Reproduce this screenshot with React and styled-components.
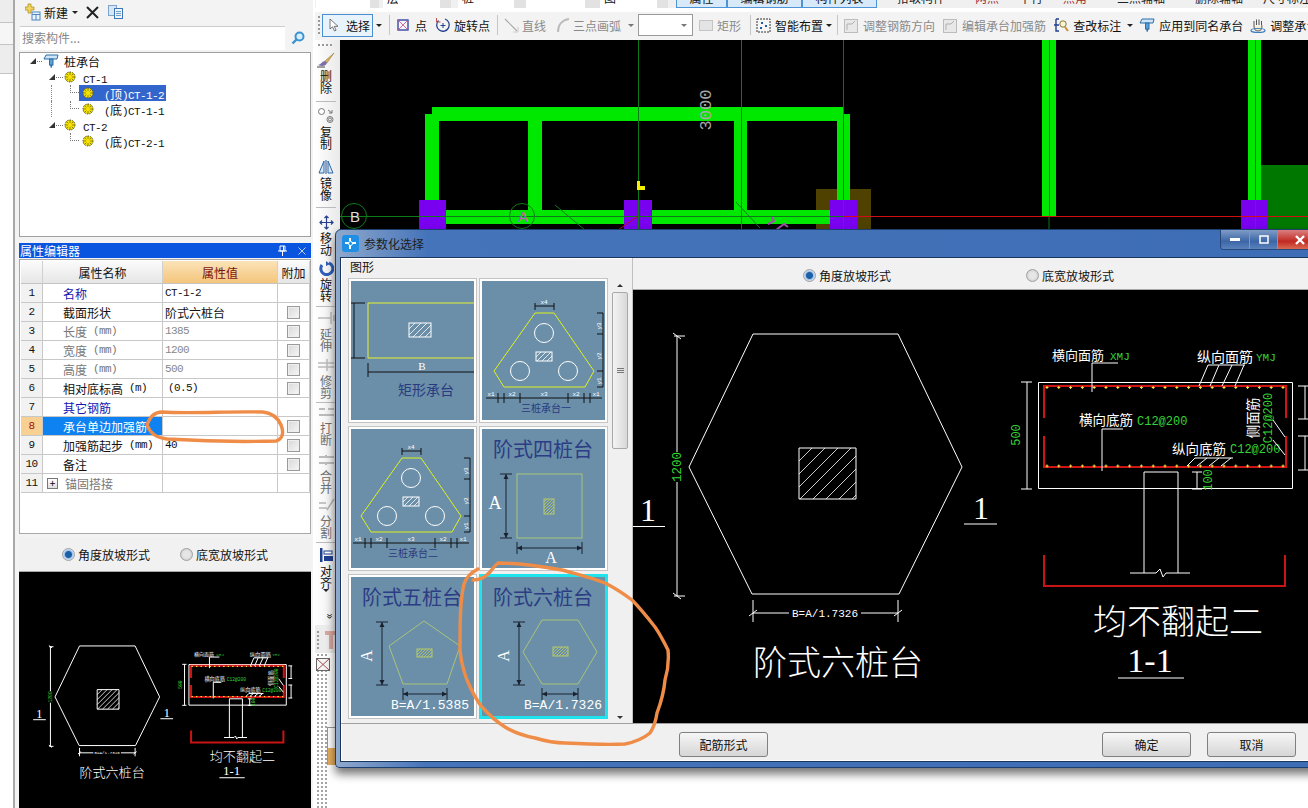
import React from "react";
import styled, { createGlobalStyle } from "styled-components";

const CJK = `"Noto Sans CJK SC", "Liberation Sans", sans-serif`;
const MONO = `"Liberation Mono", "Noto Sans CJK SC", monospace`;
const SERIF = `"Liberation Serif", "Noto Sans CJK SC", serif`;

const GlobalStyle = createGlobalStyle`
  html, body { margin: 0; padding: 0; background: #fff; }
  body { font-family: ${CJK}; font-size: 12px; color: #111; }
`;

const Page = styled.div`
  position: relative;
  display: flex;
  width: 1308px;
  height: 808px;
  overflow: hidden;
  background: #fff;
`;

const EdgeRail = styled.div`
  width: 13px;
  flex: none;
  border-right: 2px solid #a8a8a8;
  background: #fff;
  display: flex;
  flex-direction: column;
`;

const EdgeTab = styled.div`
  height: ${(p) => p.$h}px;
  background: ${(p) => p.$bg};
  border-bottom: 1px solid #c4c4c4;
`;

const SidePanel = styled.div`
  width: 298px;
  flex: none;
  display: flex;
  flex-direction: column;
  background: #f3f3f3;
  margin-right: 2px;
`;

const SideBar = styled.div`
  height: 24px;
  flex: none;
  margin-bottom: 2px;
  display: flex;
  align-items: center;
  padding-left: 10px;
`;

const SideLabel = styled.span`
  margin-left: 3px;
  font-size: 12px;
`;

const SideAction = styled.span`
  display: flex;
  margin-left: ${(p) => p.$ml}px;
`;

const Caret = styled.span`
  flex: none;
  margin-left: ${(p) => p.$ml || 0}px;
  width: 0;
  height: 0;
  border-left: 3px solid transparent;
  border-right: 3px solid transparent;
  border-top: 3px solid ${(p) => (p.$off ? "#777" : "#222")};
`;

const SearchRow = styled.div`
  height: 24px;
  flex: none;
  margin: 0 3px 1px 5px;
  display: flex;
  align-items: stretch;
`;

const SearchInput = styled.div`
  width: 265px;
  background: #fff;
  color: #888;
  font-size: 12px;
  line-height: 21px;
  padding-left: 2px;
  box-sizing: border-box;
  border-top: 1px solid #ccc;
`;

const SearchButton = styled.div`
  flex: 1;
  display: flex;
  align-items: center;
  justify-content: center;
`;

const TreeBox = styled.div`
  height: 185px;
  flex: none;
  box-sizing: border-box;
  margin: 1px 2px 0 4px;
  background: #fff;
  border: 1px solid #a0a0a0;
`;

const TreeRow = styled.div`
  display: flex;
  align-items: center;
  height: 16px;
  padding-left: ${(p) => p.$indent}px;
`;

const Expander = styled.span`
  width: 0;
  height: 0;
  flex: none;
  border-left: 6px solid transparent;
  border-bottom: 6px solid #333;
`;

const DotLink = styled.span`
  width: ${(p) => p.$w}px;
  margin: 0 1px;
  flex: none;
  border-top: 1px dotted #777;
`;

const TreeGuide = styled.span`
  width: 19px;
  height: 16px;
  flex: none;
  box-sizing: border-box;
  border-left: ${(p) => (p.$on ? "1px dotted #888" : "0")};
`;

const TreeElbow = styled.span`
  width: 9px;
  height: 8px;
  flex: none;
  align-self: flex-start;
  box-sizing: border-box;
  border-left: 1px dotted #777;
  border-bottom: 1px dotted #777;
`;

const TreeLeaf = styled.span`
  display: flex;
  align-items: center;
  height: 16px;
  padding: 0 2px 0 3px;
  gap: 10px;
  background: ${(p) => (p.$sel ? "#3366cc" : "transparent")};
  color: ${(p) => (p.$sel ? "#fff" : "#111")};
  white-space: nowrap;
`;

const TreeText = styled.span`
  margin-left: ${(p) => p.$ml}px;
  font-size: 12px;
  white-space: nowrap;
`;

const Mono = styled.span`
  font-family: ${MONO};
  font-size: 11px;
  letter-spacing: -0.6px;
`;

const PanelTitle = styled.div`
  height: 15px;
  flex: none;
  margin: 6px 2px 0 4px;
  padding: 0 5px 0 1px;
  background: #0a55e0;
  color: #fff;
  font-size: 12px;
  line-height: 15px;
  display: flex;
  align-items: center;
  justify-content: space-between;
`;

const TitleIcons = styled.span`
  display: flex;
  gap: 11px;
  align-items: center;
`;

const PropBox = styled.div`
  height: 275px;
  flex: none;
  box-sizing: border-box;
  margin: 1px 2px 0 4px;
  padding: 1px 0 0 1px;
  background: #fff;
  border: 1px solid #a8a8a8;
`;

const PropRow = styled.div`
  display: grid;
  grid-template-columns: 22px 120px 115px 32px;
  height: ${(p) => (p.$head ? 23 : 19)}px;
  width: 289px;
`;

const HeadCell = styled.div`
  display: flex;
  align-items: center;
  justify-content: center;
  font-size: 12px;
  color: ${(p) => (p.$active ? "#7a1010" : "#111")};
  background: ${(p) =>
    p.$active ? "linear-gradient(#fbe3b8, #f4c57c)" : "linear-gradient(#fbfbfb, #e6e6e6)"};
  border-right: 1px solid #d0d0d0;
  border-bottom: 1px solid #c4c4c4;
  box-sizing: border-box;
`;

const SeqCell = styled.div`
  display: flex;
  align-items: center;
  justify-content: center;
  font-family: ${MONO};
  font-size: 11px;
  letter-spacing: -0.6px;
  color: ${(p) => (p.$active ? "#a01010" : "#111")};
  background: ${(p) => (p.$active ? "#f8d092" : "#f2f2f2")};
  border-right: 1px solid #c8c8c8;
  border-bottom: 1px solid #c8c8c8;
  box-sizing: border-box;
`;

const nameColors = { blue: "#1616b0", gray: "#777", dark: "#111", sel: "#fff" };

const NameCell = styled.div`
  display: flex;
  align-items: center;
  padding-left: ${(p) => (p.$plus ? 4 : 20)}px;
  font-size: 12px;
  white-space: nowrap;
  overflow: hidden;
  color: ${(p) => nameColors[p.$tone]};
  background: ${(p) => (p.$tone === "sel" ? "#0f82f2" : "#fff")};
  border-right: 1px solid #c8c8c8;
  border-bottom: 1px solid #c8c8c8;
  box-sizing: border-box;
`;

const PlusBox = styled.span`
  width: 9px;
  height: 9px;
  margin-right: 7px;
  flex: none;
  border: 1px solid #777;
  background: linear-gradient(#fff, #ddd);
  color: #000;
  font-size: 10px;
  line-height: 8px;
  text-align: center;
`;

const ValueCell = styled.div`
  display: flex;
  align-items: center;
  padding-left: ${(p) => p.$pad || 2}px;
  font-size: 12px;
  color: ${(p) => (p.$gray ? "#888" : "#111")};
  border-right: 1px solid #c8c8c8;
  border-bottom: 1px solid #c8c8c8;
  box-sizing: border-box;
`;

const AddCell = styled.div`
  display: flex;
  align-items: center;
  justify-content: center;
  border-right: 1px solid #c8c8c8;
  border-bottom: 1px solid #c8c8c8;
  box-sizing: border-box;
`;

const CheckBox = styled.span`
  width: 11px;
  height: 11px;
  border: 1px solid #9a9a9a;
  background: linear-gradient(135deg, #d8d8d8, #f6f6f6);
  box-shadow: inset 0 0 0 1px #efefef;
`;

const RadioRow = styled.div`
  display: flex;
  align-items: center;
  flex: none;
  height: ${(p) => p.$h}px;
  margin: ${(p) => p.$margin || 0};
  padding-left: ${(p) => p.$pad}px;
  padding-top: ${(p) => p.$top || 0}px;
  background: #f1f1f1;
  border-bottom: 1px solid #a8a8a8;
  font-size: 12px;
  box-sizing: border-box;
`;

const Radio = styled.span`
  width: 11px;
  height: 11px;
  flex: none;
  border-radius: 50%;
  border: 1px solid #a0a0a0;
  margin-left: ${(p) => p.$ml || 0}px;
  margin-right: 3px;
  background: ${(p) =>
    p.$on
      ? "radial-gradient(circle, #1a5fa8 0 3px, #9cc2e4 4px, #eef 6px)"
      : "radial-gradient(circle, #e6e6e6 0 3px, #d0d0d0 6px)"};
`;

const MiniPreview = styled.div`
  flex: 1;
  margin: 0 2px 0 4px;
  background: #000;
  min-height: 0;
`;

const DrawingSvg = styled.svg`
  display: block;
  width: 100%;
  flex: 1;
  min-height: 0;
  height: 100%;
  background: #000;
  & line,
  & polyline,
  & polygon,
  & rect,
  & path {
    vector-effect: non-scaling-stroke;
  }
`;

const RightSide = styled.div`
  flex: 1;
  min-width: 0;
  display: flex;
  flex-direction: column;
`;

const TopStrip = styled.div`
  height: 8px;
  flex: none;
  display: flex;
  align-items: flex-end;
  overflow: hidden;
  background: #f0f0f0;
  white-space: nowrap;
`;

const StripField = styled.span`
  flex: none;
  height: 20px;
  width: ${(p) => p.$w}px;
  margin-left: ${(p) => p.$ml}px;
  background: ${(p) => p.$bg || "#fff"};
  font-size: 12px;
  line-height: 20px;
  padding-left: ${(p) => p.$pad || 0}px;
  box-sizing: border-box;
`;

const StripButton = styled.span`
  flex: none;
  height: 20px;
  width: ${(p) => p.$w}px;
  background: #d8e9f9;
  border: 1px solid #4d94d6;
  box-sizing: border-box;
  font-size: 12px;
  line-height: 18px;
  text-align: center;
`;

const StripText = styled.span`
  flex: none;
  height: 20px;
  margin-left: ${(p) => p.$ml}px;
  font-size: 12px;
  line-height: 20px;
  color: ${(p) => p.$color || "#222"};
`;

const Toolbar = styled.div`
  height: 28px;
  flex: none;
  margin-top: 4px;
  padding: 0 0 2px 3px;
  box-sizing: border-box;
  display: flex;
  align-items: center;
  background: #f3f3f3;
  overflow: hidden;
  white-space: nowrap;
`;

const Grip = styled.span`
  width: 2px;
  height: 18px;
  flex: none;
  background: repeating-linear-gradient(#999 0 2px, transparent 2px 4px);
`;

const SelectButton = styled.button`
  flex: none;
  margin-left: 2px;
  width: 51px;
  height: 23px;
  padding: 0 0 0 6px;
  display: flex;
  align-items: center;
  gap: 7px;
  background: #e9f3fc;
  border: 1px solid #4a90d0;
  font: 12px ${CJK};
  color: #111;
`;

const ToolItem = styled.span`
  flex: none;
  display: flex;
  align-items: center;
  gap: ${(p) => p.$gap || 4}px;
  margin-left: ${(p) => p.$ml}px;
  font-size: 12px;
  color: ${(p) => (p.$off ? "#8a8a8a" : "#111")};
`;

const ToolSep = styled.span`
  width: 1px;
  height: 20px;
  flex: none;
  margin-left: ${(p) => p.$ml}px;
  background: #c6c6c6;
`;

const ComboBox = styled.span`
  flex: none;
  width: 55px;
  height: 22px;
  margin-left: ${(p) => p.$ml}px;
  box-sizing: border-box;
  padding-right: 5px;
  display: flex;
  align-items: center;
  justify-content: flex-end;
  background: #fff;
  border: 1px solid #9a9a9a;
`;

const WorkRow = styled.div`
  flex: 1;
  display: flex;
  min-height: 0;
`;

const ToolRail = styled.div`
  width: 25px;
  flex: none;
  display: flex;
  flex-direction: column;
  background: #fff;
`;

const RailTools = styled.div`
  height: 585px;
  flex: none;
  padding: 4px 3px 0 0;
  box-sizing: border-box;
  display: flex;
  flex-direction: column;
  align-items: center;
  background: linear-gradient(to right, #fff, #e9e9e9);
`;

const RailGrip = styled.span`
  width: 16px;
  height: 2px;
  flex: none;
  margin-bottom: 2px;
  background: repeating-linear-gradient(to right, #999 0 2px, transparent 2px 4px);
`;

const RailItem = styled.div`
  flex: none;
  display: flex;
  flex-direction: column;
  align-items: center;
  margin-top: ${(p) => p.$mt}px;
  width: 100%;
  height: 42px;
  color: ${(p) => (p.$off ? "#707070" : "#111")};
  font-size: 12px;
  line-height: 12px;
`;

const RailIcon = styled.span`
  height: 16px;
  flex: none;
  display: flex;
  align-items: center;
  justify-content: center;
`;

const RailLabel = styled.span`
  width: 12px;
  margin-top: 2px;
  text-align: center;
`;

const RailSep = styled.span`
  width: 20px;
  height: 1px;
  flex: none;
  margin-top: ${(p) => p.$mt}px;
  background: #bbb;
`;

const RailMore = styled.span`
  margin: 20px 0 0 10px;
  font-size: 12px;
  line-height: 8px;
  transform: rotate(90deg);
`;

const RailFoot = styled.div`
  flex: 1;
  display: flex;
  flex-direction: column;
  min-height: 0;
`;

const FootTool = styled.div`
  height: 26px;
  flex: none;
  padding: 2px 0 0 2px;
  display: flex;
  align-items: center;
  gap: 5px;
  background: #ececec;
`;

const FootBody = styled.div`
  flex: 1;
  display: flex;
  min-height: 0;
`;

const DottedStrip = styled.div`
  width: 11px;
  flex: none;
  margin-left: 1px;
  padding-top: 4px;
  background-image: radial-gradient(circle, #a4a4a4 1px, transparent 1.2px);
  background-size: 4px 4px;
`;

const PeekPanel = styled.div`
  width: 9px;
  height: 37px;
  flex: none;
  margin-top: 74px;
  border-left: 1px solid #999;
  border-top: 1px solid #999;
  background: linear-gradient(#fff 0 20px, #e4ad5c 20px);
`;

const WorkColumn = styled.div`
  flex: 1;
  min-width: 0;
  display: flex;
  flex-direction: column;
`;

const Canvas = styled.div`
  height: 190px;
  flex: none;
  background: #000;
`;

const CanvasSvg = styled.svg`
  display: block;
  width: 100%;
  height: 100%;
`;

/* floating dialog */
const Dialog = styled.div`
  position: absolute;
  left: 335px;
  top: 229px;
  width: 985px;
  height: 539px;
  display: flex;
  flex-direction: column;
  box-sizing: border-box;
  padding: 0 4px 5px;
  border-radius: 6px 6px 4px 4px;
  border: 1px solid #1d3f70;
  background: linear-gradient(to right, #8fa9cc 0, #4674ba 90px, #3d6db5 100%);
  box-shadow: 0 6px 10px rgba(0, 0, 0, 0.55);
`;

const DialogTitle = styled.div`
  height: 27px;
  flex: none;
  display: flex;
  align-items: center;
  gap: 5px;
  padding-left: 2px;
  color: #1d1d1d;
  font-size: 12px;
`;

const WindowButtons = styled.div`
  position: absolute;
  top: 0;
  right: -5px;
  display: flex;
  height: 19px;
  border: 1px solid #27487a;
  border-top: 0;
  border-radius: 0 0 4px 4px;
  overflow: hidden;
`;

const WindowButton = styled.span`
  width: ${(p) => p.$w}px;
  display: flex;
  align-items: center;
  justify-content: center;
  border-right: 1px solid #7a98c4;
  background: ${(p) =>
    p.$close
      ? "linear-gradient(#d98080, #c22a22 60%, #d86a50)"
      : "linear-gradient(#7f9cc6, #3c66a6 60%, #5a82bc)"};
  color: #fff;
`;

const DialogBody = styled.div`
  flex: 1;
  min-height: 0;
  display: flex;
  flex-direction: column;
  background: #f0f0f0;
  border: 1px solid #18365f;
  box-shadow: inset 0 0 0 1px #fff;
`;

const DialogMain = styled.div`
  flex: 1;
  min-height: 0;
  display: flex;
  border-bottom: 1px solid #a0a0a0;
`;

const ListPane = styled.div`
  width: 291px;
  flex: none;
  display: flex;
  flex-direction: column;
  border-right: 1px solid #c0c0c0;
`;

const ListTitle = styled.div`
  height: 23px;
  flex: none;
  padding-left: 9px;
  font-size: 12px;
  line-height: 18px;
  color: #111;
`;

const ListBody = styled.div`
  flex: 1;
  display: flex;
  padding-left: 10px;
`;

const ShapeGrid = styled.div`
  display: grid;
  grid-template-columns: 123px 123px;
  grid-auto-rows: 139px;
  column-gap: 8px;
  row-gap: 9px;
  width: 254px;
`;

const ShapeCell = styled.div`
  background: #6b8fa8;
  box-shadow: 0 0 0 ${(p) => (p.$sel ? "3px #1fe4ee" : "2px #fff, 0 0 0 3px #c4c4c4")};
`;

const ShapeSvg = styled.svg`
  display: block;
  width: 123px;
  height: 139px;
`;

const ScrollBar = styled.div`
  width: 16px;
  margin-left: 7px;
  display: flex;
  flex-direction: column;
  align-items: center;
  height: 441px;
`;

const ScrollArrow = styled.span`
  width: 0;
  height: 0;
  flex: none;
  margin: ${(p) => (p.$up ? "3px 0 5px" : "auto 0 3px")};
  border-left: 3px solid transparent;
  border-right: 3px solid transparent;
  ${(p) => (p.$up ? "border-bottom: 3px solid #333;" : "border-top: 3px solid #333;")}
`;

const ScrollThumb = styled.div`
  width: 14px;
  height: 155px;
  flex: none;
  display: flex;
  flex-direction: column;
  align-items: center;
  justify-content: center;
  gap: 1px;
  border: 1px solid #a8a8a8;
  border-radius: 2px;
  background: linear-gradient(to right, #f4f4f4, #d8d8d8);
`;

const ScrollTick = styled.span`
  width: 7px;
  height: 1px;
  background: #777;
`;

const PreviewPane = styled.div`
  flex: 1;
  min-width: 0;
  display: flex;
  flex-direction: column;
`;

const ButtonBar = styled.div`
  height: 37px;
  flex: none;
  box-sizing: border-box;
  display: flex;
  align-items: center;
  padding: 4px 18px 0 338px;
  gap: 16px;
`;

const DialogButton = styled.button`
  width: 89px;
  height: 25px;
  margin-left: ${(p) => (p.$push ? "auto" : "0")};
  padding: 0;
  font: 12px ${CJK};
  color: #111;
  border: 1px solid #808080;
  border-radius: 3px;
  background: linear-gradient(#f6f6f6, #e6e6e6 50%, #d6d6d6);
`;

const Annotation = styled.svg`
  position: absolute;
  left: 0;
  top: 0;
  width: 1308px;
  height: 808px;
  pointer-events: none;
`;

/* small icons */
const GearIcon = () => (
  <svg width="12" height="12" viewBox="0 0 12 12">
    <circle cx="6" cy="6" r="5" fill="#f4e200" stroke="#5a5a20" strokeDasharray="1.5 1" />
    <path d="M6 1v10M1 6h10M2.5 2.5l7 7M9.5 2.5l-7 7" stroke="#6b5a00" strokeWidth="0.7" />
    <circle cx="6" cy="6" r="2.2" fill="#f4e200" />
  </svg>
);

const CapIcon = ({ size = 16 }) => (
  <svg width={size} height={size} viewBox="0 0 16 16">
    <path d="M3 2h12l-1 4H1z" fill="#cfe4f7" stroke="#2b6ea8" />
    <rect x="6.5" y="6" width="3.5" height="6" fill="#5aa0d8" stroke="#2b6ea8" />
    <path d="M7 12h2.5l-1 3h-.6z" fill="#2b6ea8" />
  </svg>
);

const NewIcon = () => (
  <svg width="16" height="18" viewBox="0 0 16 18">
    <path d="M3 1h3v3h3v3H6v3H3V7H0V4h3z" fill="#f2d35c" stroke="#a58a20" strokeWidth="0.7" />
    <rect x="7" y="9" width="8" height="8" fill="#eaf2fb" stroke="#4d86c0" />
    <path d="M7 11.5h8M11 11.5V17" stroke="#4d86c0" />
  </svg>
);

const CrossIcon = () => (
  <svg width="13" height="13" viewBox="0 0 13 13">
    <path d="M1 1l11 11M12 1L1 12" stroke="#222" strokeWidth="2" />
  </svg>
);

const CopyIcon = () => (
  <svg width="15" height="14" viewBox="0 0 15 14">
    <rect x="0.5" y="0.5" width="8" height="10" fill="#d8e6f6" stroke="#7ba3cc" />
    <rect x="6.5" y="3.5" width="8" height="10" fill="#eef4fb" stroke="#3e78b2" />
    <path d="M8 6.5h5M8 8.5h5M8 10.5h5" stroke="#3e78b2" strokeWidth="0.7" />
  </svg>
);

const SearchIcon = () => (
  <svg width="14" height="14" viewBox="0 0 14 14">
    <circle cx="8.5" cy="5.5" r="4" fill="#d9eefc" stroke="#3b93cf" strokeWidth="2" />
    <path d="M5.5 8.5L1.5 12.5" stroke="#3b93cf" strokeWidth="2.4" />
  </svg>
);

const PinIcon = () => (
  <svg width="9" height="11" viewBox="0 0 9 11">
    <path d="M2 1h5v5H2zM0 6h9M4.5 6v5M5.5 1v5" fill="none" stroke="#fff" />
  </svg>
);

const PanelCloseIcon = () => (
  <svg width="8" height="8" viewBox="0 0 8 8">
    <path d="M0.5 0.5l7 7M7.5 0.5l-7 7" stroke="#bcd0f4" />
  </svg>
);

const PointerIcon = () => (
  <svg width="10" height="14" viewBox="0 0 10 14">
    <path d="M1 1v10l2.5-2.2L5.5 13l1.6-.8L5.2 8.3H9z" fill="#fff" stroke="#555" strokeWidth="0.8" />
  </svg>
);

const BoxCrossIcon = () => (
  <svg width="12" height="12" viewBox="0 0 12 12">
    <rect x="1" y="1" width="10" height="10" fill="#f4f4fb" stroke="#2c3a9c" strokeWidth="1.3" />
    <path d="M1 1l10 10M11 1L1 11" stroke="#c04a7a" strokeWidth="0.8" />
  </svg>
);

const RotateIcon = () => (
  <svg width="16" height="16" viewBox="0 0 16 16">
    <path d="M3.5 3.5A6.3 6.3 0 1 0 10 2" fill="none" stroke="#24408c" strokeWidth="1.3" />
    <path d="M1.5 1v4h4" fill="none" stroke="#b55" strokeWidth="1" />
    <path d="M8 6v5M5.5 8.5h5" stroke="#24408c" />
  </svg>
);

const LineIcon = () => (
  <svg width="15" height="15" viewBox="0 0 15 15">
    <path d="M1 1l12 12" stroke="#aaa" strokeWidth="1.2" />
    <path d="M9 14h5V9" fill="none" stroke="#ccc" />
  </svg>
);

const ArcIcon = () => (
  <svg width="14" height="15" viewBox="0 0 14 15">
    <path d="M2 14C2 7 6 2 13 1" fill="none" stroke="#bbb" strokeWidth="2" />
  </svg>
);

const RectIcon = () => (
  <svg width="14" height="11" viewBox="0 0 14 11">
    <rect x="0.5" y="0.5" width="13" height="10" fill="#e4e4e4" stroke="#c4c4c4" />
  </svg>
);

const SmartIcon = () => (
  <svg width="15" height="15" viewBox="0 0 15 15">
    <rect x="1" y="1" width="13" height="13" fill="#f6f6f6" stroke="#333" strokeDasharray="2 1" />
    <path d="M5 4h2v2H5zM9 7h2v2H9zM4 9h2v2H4z" fill="#1b5ea8" />
  </svg>
);

const GreyBoxIcon = () => (
  <svg width="14" height="15" viewBox="0 0 14 15">
    <rect x="0.5" y="1.5" width="13" height="13" fill="#e8e8e8" stroke="#bcbcbc" />
    <path d="M3 12V6h5l3-3" fill="none" stroke="#b0b0b0" />
  </svg>
);

const CheckMarkIcon = () => (
  <svg width="16" height="16" viewBox="0 0 16 16">
    <path d="M3 2h3M3 2v12h3M1 8h5" fill="none" stroke="#24408c" strokeWidth="1.4" />
    <circle cx="10" cy="7" r="3.2" fill="#f8f4d8" stroke="#8a7a30" />
    <path d="M12 10l3 4" stroke="#c9902c" strokeWidth="2" />
  </svg>
);

const HandIcon = () => (
  <svg width="16" height="16" viewBox="0 0 16 16">
    <path
      d="M4 9V4M6.5 8V2.5M9 8V2.5M11.5 8.5V4M4 9c0 3 1 5 4 5s4-2 4-5.5"
      fill="#f7f0d4"
      stroke="#555"
    />
    <ellipse cx="8" cy="13.5" rx="7" ry="2" fill="none" stroke="#3b7cc0" strokeWidth="1.2" />
  </svg>
);

const BrushIcon = () => (
  <svg width="18" height="16" viewBox="0 0 18 16">
    <path d="M17 1L8 9l2 2z" fill="#d8b060" stroke="#8a6a20" strokeWidth="0.5" />
    <path d="M8 9c-3 0-3 3-7 4 4 2 8 1 9-2z" fill="#7c6ea8" />
    <path d="M0 15h8" stroke="#444" />
  </svg>
);

const CopyShapeIcon = () => (
  <svg width="17" height="16" viewBox="0 0 17 16">
    <circle cx="3.5" cy="3.5" r="3" fill="#fff" stroke="#777" />
    <circle cx="12" cy="11.5" r="3" fill="none" stroke="#777" />
    <circle cx="12" cy="11.5" r="1.5" fill="none" stroke="#777" />
    <path d="M10 2l4 3M14 2v3h-3" fill="none" stroke="#777" />
  </svg>
);

const MirrorIcon = () => (
  <svg width="16" height="14" viewBox="0 0 16 14">
    <path d="M8 0v14" stroke="#24508c" />
    <path d="M6 1L1 13h5zM10 1l5 12h-5z" fill="#d8e6f6" stroke="#2c68a8" />
  </svg>
);

const MoveIcon = () => (
  <svg width="15" height="15" viewBox="0 0 15 15">
    <path d="M7.5 1v13M1 7.5h13M5.5 3l2-2 2 2M5.5 12l2 2 2-2M3 5.5l-2 2 2 2M12 5.5l2 2-2 2" fill="none" stroke="#24408c" strokeWidth="1.2" />
  </svg>
);

const SpinIcon = () => (
  <svg width="15" height="15" viewBox="0 0 15 15">
    <path d="M3 4a6 6 0 1 0 7-2" fill="none" stroke="#2f5fb8" strokeWidth="3" />
    <path d="M7 0v5l4-2z" fill="#2f5fb8" />
  </svg>
);

const FadeBarsIcon = ({ kind }) => (
  <svg width="17" height="14" viewBox="0 0 17 14">
    {kind === "extend" && <path d="M0 7h13M13 1v12M16 4v6" stroke="#bbb" strokeWidth="1.5" fill="none" />}
    {kind === "trim" && <path d="M0 5h16M0 9h16M9 1v12" stroke="#bbb" strokeWidth="1.5" fill="none" />}
    {kind === "break" && <path d="M1 4h6M10 4h6M1 10h15" stroke="#bbb" strokeWidth="2" fill="none" />}
    {kind === "merge" && <path d="M1 4h15M1 10h15M8 2v2M8 10v2" stroke="#bbb" strokeWidth="2" fill="none" />}
    {kind === "split" && <path d="M1 5h7M1 10h8M9 12l7-11" stroke="#b4b4b4" strokeWidth="1.5" fill="none" />}
  </svg>
);

const AlignIcon = () => (
  <svg width="15" height="16" viewBox="0 0 15 16">
    <rect x="1" y="1" width="2.5" height="14" fill="#1f3f90" />
    <rect x="5" y="4" width="8" height="3" fill="#fff" stroke="#1f3f90" />
    <rect x="5" y="9" width="9" height="5" fill="#1f3f90" />
  </svg>
);

const ArrowUpFaded = () => (
  <svg width="14" height="20" viewBox="0 0 14 20">
    <path d="M1 3h12M7 3v16" stroke="#d8a8a0" strokeWidth="4" />
  </svg>
);

const EnvelopeIcon = () => (
  <svg width="14" height="13" viewBox="0 0 14 13">
    <rect x="0.5" y="0.5" width="13" height="12" fill="#f4f4f4" stroke="#666" />
    <path d="M1 1l12 11M13 1L1 12" stroke="#a05050" />
  </svg>
);

const DialogIcon = () => (
  <svg width="17" height="17" viewBox="0 0 17 17">
    <rect width="17" height="17" rx="3" fill="#1f8fe6" />
    <path d="M8 3v3M8 10v4M3 8h4M10 8h4" stroke="#fff" strokeWidth="2" />
    <circle cx="8.5" cy="8.5" r="2" fill="none" stroke="#dff" />
  </svg>
);

/* CAD drawing parts */
const Hatch = ({ x, y, w, h, step, stroke = "#fff", sw = 1 }) => {
  const lines = [];
  for (let c = x + y + step; c < x + y + w + h; c += step) {
    let x1 = c - y;
    let y1 = y;
    if (x1 > x + w) {
      x1 = x + w;
      y1 = c - x1;
    }
    let x2 = x;
    let y2 = c - x;
    if (y2 > y + h) {
      y2 = y + h;
      x2 = c - y2;
    }
    lines.push(<line key={c} x1={x1} y1={y1} x2={x2} y2={y2} stroke={stroke} strokeWidth={sw * 0.8} />);
  }
  return (
    <g>
      {lines}
      <rect x={x} y={y} width={w} height={h} fill="none" stroke={stroke} strokeWidth={sw} />
    </g>
  );
};

const Seg = ({ d, c = "#fff", w = 1 }) => <path d={d} fill="none" stroke={c} strokeWidth={w} />;

const Txt = ({ x, y, size, c = "#fff", font = CJK, anchor = "middle", rot, children, weight }) => (
  <text
    x={x}
    y={y}
    fontSize={size}
    fill={c}
    fontFamily={font}
    fontWeight={weight}
    textAnchor={anchor}
    transform={rot ? `rotate(${rot} ${x} ${y})` : undefined}
  >
    {children}
  </text>
);

const dots = Array.from({ length: 21 }, (_, i) => 1047 + i * 11.8);

const PreviewDrawing = () => (
  <g>
    <polygon points="753,334 898,334 962,467 899,594 752,594 689,467" fill="none" stroke="#fff" />
    <Hatch x={799} y={448} w={57} h={51} step={13} />
    <Seg d="M677 336V596M674 336h11M674 596h11M673 333l8 6M673 593l8 6" />
    <rect x={672} y={452} width={11} height={30} fill="#000" stroke="none" />
    <Txt x={681} y={467} size={12.5} c="#35d435" font={MONO} rot={-90}>1200</Txt>
    <Txt x={648} y={521} size={32} font={SERIF}>1</Txt>
    <Seg d="M632 526.5H665" />
    <Txt x={981} y={519} size={32} font={SERIF}>1</Txt>
    <Seg d="M964 524H997" />
    <Seg d="M753 600V622M898 600V622M753 613H789M861 613H898M749 616l8 -6M894 616l8 -6" />
    <Txt x={825} y={617} size={11} font={MONO}>B=A/1.7326</Txt>
    <Txt x={838} y={675} size={34} weight={300}>阶式六桩台</Txt>

    <rect x={1038.5} y={382.5} width={254} height={106} fill="none" stroke="#fff" />
    <Seg d="M1044 418V386H1286V418M1044 436V467H1286V436" c="#d01414" w={2} />
    {dots.map((x) => (
      <g key={x}>
        <Seg d={`M${x - 1.5} 387.5h3M${x} 386v3`} c="#f6e04a" />
        <Seg d={`M${x - 1.5} 466h3M${x} 464.5v3`} c="#f6e04a" />
      </g>
    ))}
    <Seg d="M1027 382V489M1021 382h11M1021 489h11" />
    <Txt x={1020} y={435} size={12} c="#35d435" font={MONO} rot={-90}>500</Txt>

    <Txt x={1052} y={360} size={13} anchor="start">横向面筋</Txt>
    <Txt x={1110} y={360} size={11} anchor="start" c="#35d435" font={MONO}>XMJ</Txt>
    <Seg d="M1118 363H1092V392" />
    <Txt x={1197} y={362} size={14} anchor="start">纵向面筋</Txt>
    <Txt x={1256} y={361} size={11} anchor="start" c="#35d435" font={MONO}>YMJ</Txt>
    <Seg d="M1208 365H1245M1208 365L1199 386M1219 365L1210 386M1232 365L1222 386M1244 365L1235 386" />
    <Txt x={1079} y={425} size={13.5} anchor="start">横向底筋</Txt>
    <Txt x={1137} y={425} size={12} anchor="start" c="#35d435" font={MONO}>C12@200</Txt>
    <Seg d="M1123 429H1102V471" />
    <Txt x={1172} y={454} size={13.5} anchor="start">纵向底筋</Txt>
    <Txt x={1230} y={453} size={12} anchor="start" c="#35d435" font={MONO}>C12@200</Txt>
    <Seg d="M1195 458H1233M1195 458L1187 466M1207 458L1197 466M1219 458L1209 466M1231 458L1221 466" />
    <Txt x={1258} y={418} size={13.5} rot={-90}>侧面筋</Txt>
    <Txt x={1272} y={418} size={12} c="#35d435" font={MONO} rot={-90}>C12@200</Txt>
    <Seg d="M1273 420L1285 437M1273 440L1285 455" />

    <Seg d="M1144 573V472H1178V573M1130 573H1156L1160 569L1163 577L1166 573H1190" />
    <Seg d="M1192 472h10M1192 489h10M1197 472V489" />
    <Txt x={1212} y={480} size={12} c="#35d435" font={MONO} rot={-90}>100</Txt>
    <Seg d="M1298 386H1308M1298 419H1308M1298 436H1308M1298 470H1308M1305 386V419M1305 436V470" />

    <Seg d="M1044 555V586H1285V555" c="#c81414" w={2} />
    <Txt x={1178} y={634} size={34} weight={300}>均不翻起二</Txt>
    <Txt x={1150} y={672} size={34} font={SERIF}>1-1</Txt>
    <Seg d="M1118 678H1184" />
  </g>
);

const ThreePile = ({ label, dx = 0, dy = 0 }) => (
  <g transform={`translate(${dx} ${dy})`}>
    <polygon points="53,32 72,32 112,90 103,106 22,106 12,90" fill="none" stroke="#dcf21e" />
    <circle cx="62" cy="52" r="9.5" fill="none" stroke="#fff" />
    <circle cx="38" cy="90" r="9.5" fill="none" stroke="#fff" />
    <circle cx="86" cy="90" r="9.5" fill="none" stroke="#fff" />
    <Hatch x={54} y={71} w={16} h={9} step={5} />
    <Seg d="M53 25H72M53 22V29M72 22V29M115 32H121M121 32V106M115 53H121M115 90H121M115 106H121" c="#111" />
    <Seg d="M4 117H120M16 112V122M22 112V122M38 112V122M86 112V122M102 112V122M108 112V122" c="#111" />
    <Txt x={62} y={23} size={6} font={MONO}>x4</Txt>
    <Txt x={119} y={45} size={6} font={MONO} rot={-90}>y3</Txt>
    <Txt x={119} y={75} size={6} font={MONO} rot={-90}>y2</Txt>
    <Txt x={119} y={100} size={6} font={MONO} rot={-90}>y1</Txt>
    <Txt x={9} y={115} size={6} font={MONO}>x1</Txt>
    <Txt x={30} y={115} size={6} font={MONO}>x2</Txt>
    <Txt x={62} y={115} size={6} font={MONO}>x3</Txt>
    <Txt x={94} y={115} size={6} font={MONO}>x2</Txt>
    <Txt x={114} y={115} size={6} font={MONO}>x1</Txt>
    <Txt x={64} y={131} size={10} c="#2a3a80">{label}</Txt>
  </g>
);

const ArrowDim = ({ x, y1, y2 }) => (
  <g>
    <Seg d={`M${x} ${y1}V${y2}M${x - 6} ${y1}h12M${x - 6} ${y2}h12`} c="#1a2230" />
    <path d={`M${x} ${y1}l-2.5 5h5zM${x} ${y2}l-2.5 -5h5z`} fill="#1a2230" />
  </g>
);

const ArrowSpan = ({ y, x1, x2 }) => (
  <g>
    <Seg d={`M${x1} ${y}H${x2}M${x1} ${y - 6}v12M${x2} ${y - 6}v12`} c="#1a2230" />
    <path d={`M${x1} ${y}l5 -2.5v5zM${x2} ${y}l-5 -2.5v5z`} fill="#1a2230" />
  </g>
);

const PileFigure = ({ title, points, hatch, dimX, spanX, note, noteX, rotX }) => (
  <g>
    <Txt x={61} y={28} size={20} c="#2c3d85">{title}</Txt>
    <polygon points={points} fill="none" stroke="#a9c37a" />
    <Hatch x={hatch[0]} y={hatch[1]} w={hatch[2]} h={hatch[3]} step={3} stroke="#b7c96a" />
    <ArrowDim x={dimX} y1={45} y2={108} />
    <Txt x={rotX} y={79} size={16} font={SERIF} rot={-90}>A</Txt>
    <ArrowSpan y={117} x1={spanX[0]} x2={spanX[1]} />
    <Txt x={noteX} y={132} size={13} font={MONO} anchor="start">{note}</Txt>
  </g>
);

const shapes = [
  {
    key: "rect",
    body: (
      <g>
        <Seg d="M123 22H17V77H123" c="#e6f230" />
        <Hatch x={58} y={42} w={22} h={14} step={6} />
        <Seg d="M0 22H14M0 77H14M3 22V77M17 82V96M17 91H123" c="#111" />
        <Txt x={71} y={89} size={11} font={SERIF}>B</Txt>
        <Txt x={75} y={114} size={14} c="#2a3a80">矩形承台</Txt>
      </g>
    ),
  },
  { key: "tri1", body: <ThreePile label="三桩承台一" /> },
  { key: "tri2", body: <ThreePile label="三桩承台二" dx={-2} dy={-3} /> },
  {
    key: "four",
    body: (
      <g>
        <Txt x={61} y={28} size={20} c="#2c3d85">阶式四桩台</Txt>
        <rect x={35} y={45} width={65} height={64} fill="none" stroke="#a9c37a" />
        <Hatch x={62} y={70} w={10} h={15} step={3} stroke="#b7c96a" />
        <ArrowDim x={24} y1={45} y2={109} />
        <Txt x={13} y={80} size={18} font={SERIF}>A</Txt>
        <ArrowSpan y={119} x1={35} x2={100} />
        <Txt x={69} y={134} size={16} font={SERIF}>A</Txt>
      </g>
    ),
  },
  {
    key: "five",
    body: (
      <PileFigure
        title="阶式五桩台"
        points="73,44 109,69 96,107 52,107 38,69"
        hatch={[66, 72, 15, 8]}
        dimX={31}
        spanX={[52, 96]}
        note="B=A/1.5385"
        noteX={40}
        rotX={21}
      />
    ),
  },
  {
    key: "six",
    sel: true,
    body: (
      <PileFigure
        title="阶式六桩台"
        points="60,43 96,43 115,75 96,107 60,107 41,75"
        hatch={[71, 70, 15, 9]}
        dimX={37}
        spanX={[60, 96]}
        note="B=A/1.7326"
        noteX={42}
        rotX={27}
      />
    ),
  },
];

const props = [
  { n: "1", name: "名称", tone: "blue", value: <Mono>CT-1-2</Mono> },
  { n: "2", name: "截面形状", tone: "dark", value: "阶式六桩台", check: true },
  { n: "3", name: "长度", unit: "(mm)", tone: "gray", value: <Mono>1385</Mono>, gray: true, check: true },
  { n: "4", name: "宽度", unit: "(mm)", tone: "gray", value: <Mono>1200</Mono>, gray: true, check: true },
  { n: "5", name: "高度", unit: "(mm)", tone: "gray", value: <Mono>500</Mono>, gray: true, check: true },
  { n: "6", name: "相对底标高", unit: "(m)", tone: "dark", value: <Mono>(0.5)</Mono>, pad: 5, check: true },
  { n: "7", name: "其它钢筋", tone: "blue" },
  { n: "8", name: "承台单边加强筋", tone: "sel", active: true, check: true },
  { n: "9", name: "加强筋起步", unit: "(mm)", tone: "dark", value: <Mono>40</Mono>, check: true },
  { n: "10", name: "备注", tone: "dark", check: true },
  { n: "11", name: "锚固搭接", tone: "gray", plus: true },
];

const railItems = [
  { chars: "删除", icon: <BrushIcon />, mt: 4 },
  { sep: 7 },
  { chars: "复制", icon: <CopyShapeIcon />, mt: 6 },
  { chars: "镜像", icon: <MirrorIcon />, mt: 9 },
  { sep: 6 },
  { chars: "移动", icon: <MoveIcon />, mt: 6 },
  { chars: "旋转", icon: <SpinIcon />, mt: 4 },
  { sep: 4 },
  { chars: "延伸", icon: <FadeBarsIcon kind="extend" />, mt: 3, off: true },
  { chars: "修剪", icon: <FadeBarsIcon kind="trim" />, mt: 5, off: true },
  { sep: 3 },
  { chars: "打断", icon: <FadeBarsIcon kind="break" />, mt: 1, off: true },
  { chars: "合并", icon: <FadeBarsIcon kind="merge" />, mt: 6, off: true },
  { chars: "分割", icon: <FadeBarsIcon kind="split" />, mt: 3, off: true },
  { sep: 3 },
  { chars: "对齐", icon: <AlignIcon />, mt: 4 },
];

const SideColumn = () => (
  <SidePanel>
    <SideBar>
      <NewIcon />
      <SideLabel>新建</SideLabel>
      <Caret $ml={4} />
      <SideAction $ml={8}><CrossIcon /></SideAction>
      <SideAction $ml={9}><CopyIcon /></SideAction>
    </SideBar>
    <SearchRow>
      <SearchInput>搜索构件...</SearchInput>
      <SearchButton><SearchIcon /></SearchButton>
    </SearchRow>
    <TreeBox>
      <TreeRow $indent={10}>
        <Expander />
        <DotLink $w={5} />
        <CapIcon />
        <TreeText $ml={5}>桩承台</TreeText>
      </TreeRow>
      <TreeRow $indent={29}>
        <Expander />
        <DotLink $w={7} />
        <GearIcon />
        <TreeText $ml={7}><Mono>CT-1</Mono></TreeText>
      </TreeRow>
      <TreeRow $indent={31}>
        <TreeGuide $on />
        <TreeElbow />
        <TreeLeaf $sel>
          <GearIcon />
          <span><Mono>(</Mono>顶<Mono>)CT-1-2</Mono></span>
        </TreeLeaf>
      </TreeRow>
      <TreeRow $indent={31}>
        <TreeGuide $on />
        <TreeElbow />
        <TreeLeaf>
          <GearIcon />
          <span><Mono>(</Mono>底<Mono>)CT-1-1</Mono></span>
        </TreeLeaf>
      </TreeRow>
      <TreeRow $indent={29}>
        <Expander />
        <DotLink $w={7} />
        <GearIcon />
        <TreeText $ml={7}><Mono>CT-2</Mono></TreeText>
      </TreeRow>
      <TreeRow $indent={31}>
        <TreeGuide />
        <TreeElbow />
        <TreeLeaf>
          <GearIcon />
          <span><Mono>(</Mono>底<Mono>)CT-2-1</Mono></span>
        </TreeLeaf>
      </TreeRow>
    </TreeBox>
    <PanelTitle>
      属性编辑器
      <TitleIcons><PinIcon /><PanelCloseIcon /></TitleIcons>
    </PanelTitle>
    <PropBox>
      <PropRow $head>
        <HeadCell />
        <HeadCell>属性名称</HeadCell>
        <HeadCell $active>属性值</HeadCell>
        <HeadCell>附加</HeadCell>
      </PropRow>
      {props.map((row) => (
        <PropRow key={row.n}>
          <SeqCell $active={row.active}>{row.n}</SeqCell>
          <NameCell $tone={row.tone} $plus={row.plus}>
            {row.plus && <PlusBox>+</PlusBox>}
            {row.name}
            {row.unit && <Mono>&nbsp;{row.unit}</Mono>}
          </NameCell>
          <ValueCell $gray={row.gray} $pad={row.pad}>{row.value}</ValueCell>
          <AddCell>{row.check && <CheckBox />}</AddCell>
        </PropRow>
      ))}
    </PropBox>
    <RadioRow $h={35} $pad={43} $margin="3px 2px 0 4px">
      <Radio $on />角度放坡形式
      <Radio $ml={30} />底宽放坡形式
    </RadioRow>
    <MiniPreview>
      <DrawingSvg viewBox="595 141 762 616" preserveAspectRatio="none">
        <PreviewDrawing />
      </DrawingSvg>
    </MiniPreview>
  </SidePanel>
);

const CadCanvas = () => (
  <Canvas>
    <CanvasSvg viewBox="340 40 968 190">
      <rect x={1261} y={165} width={47} height={65} fill="#007800" />
      <rect x={816} y={189} width={55} height={41} fill="#4f4200" />
      <path
        d="M432 107H843V121H439V210H528V121H542V210H734V121H747V210H837V114H850V216H843V224H439V230H425V114H432Z"
        fill="#00e800"
      />
      <rect x={1042} y={40} width={14} height={176} fill="#00e800" />
      <rect x={1248} y={40} width={13} height={160} fill="#00e800" />
      <rect x={419} y={200} width={27} height={30} fill="#7a00f0" />
      <rect x={624} y={200} width={28} height={30} fill="#7a00f0" />
      <rect x={830} y={200} width={27} height={30} fill="#7a00f0" />
      <rect x={1241} y={200} width={27} height={30} fill="#7a00f0" />
      <Seg d="M638.5 40V230M741.5 40V230M340 216.5H843M1049 216V230" c="#0f7a1a" />
      <Seg d="M843.5 40V230M1255.5 40V230M1049.5 40V216M843 216.5H1308" c="#d01010" />
      <circle cx={354} cy={216} r={12.5} fill="none" stroke="#0f7a1a" />
      <Txt x={355} y={222} size={15} c="#ddd" font={`"Liberation Sans", sans-serif`}>B</Txt>
      <circle cx={522} cy={216} r={12.5} fill="none" stroke="#0f7a1a" />
      <Txt x={523} y={222} size={15} c="#c05ac8" font={`"Liberation Sans", sans-serif`}>A</Txt>
      <Seg d="M555 205L585 230M736 202L760 228" c="#0f7a1a" />
      <Seg d="M618 230L638 216" c="#c01010" />
      <path d="M637 181h3v5h5v4h-8z" fill="#f4f000" />
      <Seg d="M768 224l6 -3 -2 -4M776 230l8 -6 4 3" c="#a050a8" w={2} />
      <Txt x={711} y={110} size={17} c="#a8a8a8" font={MONO} rot={-90}>3000</Txt>
    </CanvasSvg>
  </Canvas>
);

const ParamDialog = () => (
  <Dialog>
    <DialogTitle>
      <DialogIcon />
      参数化选择
    </DialogTitle>
    <WindowButtons>
      <WindowButton $w={28}>
        <svg width="10" height="4"><rect width="10" height="3" fill="#fff" /></svg>
      </WindowButton>
      <WindowButton $w={27}>
        <svg width="10" height="9"><rect x="1" y="1" width="8" height="7" fill="none" stroke="#fff" strokeWidth="1.5" /></svg>
      </WindowButton>
      <WindowButton $w={44} $close>
        <svg width="10" height="10"><path d="M1 1l8 8M9 1L1 9" stroke="#fff" strokeWidth="2.4" /></svg>
      </WindowButton>
    </WindowButtons>
    <DialogBody>
      <DialogMain>
        <ListPane>
          <ListTitle>图形</ListTitle>
          <ListBody>
            <ShapeGrid>
              {shapes.map((shape) => (
                <ShapeCell key={shape.key} $sel={shape.sel}>
                  <ShapeSvg viewBox="0 0 123 139">{shape.body}</ShapeSvg>
                </ShapeCell>
              ))}
            </ShapeGrid>
            <ScrollBar>
              <ScrollArrow $up />
              <ScrollThumb>
                <ScrollTick />
                <ScrollTick />
                <ScrollTick />
              </ScrollThumb>
              <ScrollArrow />
            </ScrollBar>
          </ListBody>
        </ListPane>
        <PreviewPane>
          <RadioRow $h={32} $pad={170} $top={3}>
            <Radio $on />角度放坡形式
            <Radio $ml={135} />底宽放坡形式
          </RadioRow>
          <DrawingSvg viewBox="633 290 681 433" preserveAspectRatio="xMinYMin slice">
            <PreviewDrawing />
          </DrawingSvg>
        </PreviewPane>
      </DialogMain>
      <ButtonBar>
        <DialogButton>配筋形式</DialogButton>
        <DialogButton $push>确定</DialogButton>
        <DialogButton>取消</DialogButton>
      </ButtonBar>
    </DialogBody>
  </Dialog>
);

export default function App() {
  return (
    <Page>
      <GlobalStyle />
      <EdgeRail>
        <EdgeTab $h={22} $bg="#ededed" />
        <EdgeTab $h={21} $bg="#f6f6f6" />
        <EdgeTab $h={28} $bg="#ededed" />
      </EdgeRail>
      <SideColumn />
      <RightSide>
        <TopStrip>
          <StripField $ml={1} $w={54} />
          <StripField $ml={0} $w={9} $bg="#e2e2e2" />
          <StripField $ml={4} $w={57} $pad={4}>层</StripField>
          <StripField $ml={0} $w={11} $bg="#e2e2e2" />
          <StripField $ml={7} $w={56} $pad={4}>桩</StripField>
          <StripField $ml={0} $w={12} $bg="#e2e2e2" />
          <StripField $ml={0} $w={59} />
          <StripField $ml={0} $w={15} $bg="#e2e2e2" />
          <StripField $ml={0} $w={57} $pad={4}>图</StripField>
          <StripField $ml={0} $w={11} $bg="#e2e2e2" />
          <StripField $ml={8} $w={0} />
          <StripButton $w={51}>属性</StripButton>
          <StripButton $w={75}>编辑钢筋</StripButton>
          <StripButton $w={75}>构件列表</StripButton>
          <StripText $ml={20}>拾取构件</StripText>
          <StripText $ml={30} $color="#a03030">两点</StripText>
          <StripText $ml={20}>平行</StripText>
          <StripText $ml={20} $color="#a03030">点角</StripText>
          <StripText $ml={30}>三点辅轴</StripText>
          <StripText $ml={30}>删除辅轴</StripText>
          <StripText $ml={20}>尺寸标注</StripText>
        </TopStrip>
        <Toolbar>
          <Grip />
          <SelectButton><PointerIcon />选择</SelectButton>
          <Caret $ml={3} />
          <ToolSep $ml={7} />
          <ToolItem $ml={7} $gap={6}><BoxCrossIcon />点</ToolItem>
          <ToolItem $ml={8} $gap={3}><RotateIcon />旋转点</ToolItem>
          <ToolSep $ml={7} />
          <ToolItem $ml={6} $gap={3} $off><LineIcon />直线</ToolItem>
          <ToolItem $ml={10} $gap={3} $off><ArcIcon />三点画弧</ToolItem>
          <Caret $ml={7} $off />
          <ComboBox $ml={4}><Caret $off /></ComboBox>
          <ToolItem $ml={6} $off><RectIcon />矩形</ToolItem>
          <ToolSep $ml={9} />
          <ToolItem $ml={5}><SmartIcon />智能布置</ToolItem>
          <Caret $ml={3} />
          <ToolSep $ml={5} />
          <ToolItem $ml={6} $gap={5} $off><GreyBoxIcon />调整钢筋方向</ToolItem>
          <ToolItem $ml={8} $gap={5} $off><GreyBoxIcon />编辑承台加强筋</ToolItem>
          <ToolItem $ml={7}><CheckMarkIcon />查改标注</ToolItem>
          <Caret $ml={6} />
          <ToolItem $ml={6}><CapIcon />应用到同名承台</ToolItem>
          <ToolItem $ml={7}><HandIcon />调整承台钢筋</ToolItem>
        </Toolbar>
        <WorkRow>
          <ToolRail>
            <RailTools>
              <RailGrip />
              {railItems.map((item, i) =>
                item.sep ? (
                  <RailSep key={i} $mt={item.sep} />
                ) : (
                  <RailItem key={item.chars} $mt={item.mt} $off={item.off}>
                    <RailIcon>{item.icon}</RailIcon>
                    <RailLabel>{item.chars}</RailLabel>
                  </RailItem>
                )
              )}
              <Caret />
              <RailMore>»</RailMore>
            </RailTools>
            <RailFoot>
              <FootTool><Grip /><ArrowUpFaded /></FootTool>
              <FootBody>
                <DottedStrip><EnvelopeIcon /></DottedStrip>
                <PeekPanel />
              </FootBody>
            </RailFoot>
          </ToolRail>
          <WorkColumn>
            <CadCanvas />
          </WorkColumn>
        </WorkRow>
      </RightSide>
      <ParamDialog />
      <Annotation viewBox="0 0 1308 808">
        <g fill="none" stroke="#ee8c48" strokeWidth="3.4" strokeLinejoin="round" strokeLinecap="round">
          <path d="M147 425C150 416 155 412 162 412C190 414 230 411 263 412C272 413 278 418 281 425C284 432 283 439 276 441C240 442 200 441 167 439C156 438 150 433 147 425Z" />
          <path d="M478 569C470 573 466 578 464 584C460 600 460 625 460 650C461 662 464 672 467 680C472 692 478 702 482 707C490 716 497 722 505 727C515 733 525 736 535 738C545 741 555 743 565 743C585 744 605 745 625 744C635 742 644 738 650 733C654 727 656 720 657 713C660 705 664 692 665 680C668 670 669 660 668 650C664 642 660 634 655 627C648 618 640 608 632 600C624 594 615 588 605 583C590 577 576 574 562 570C540 566 518 563 498 563C494 566 492 570 490 572C487 575 485 577 482 578C478 580 475 580 473 580" />
        </g>
      </Annotation>
    </Page>
  );
}
